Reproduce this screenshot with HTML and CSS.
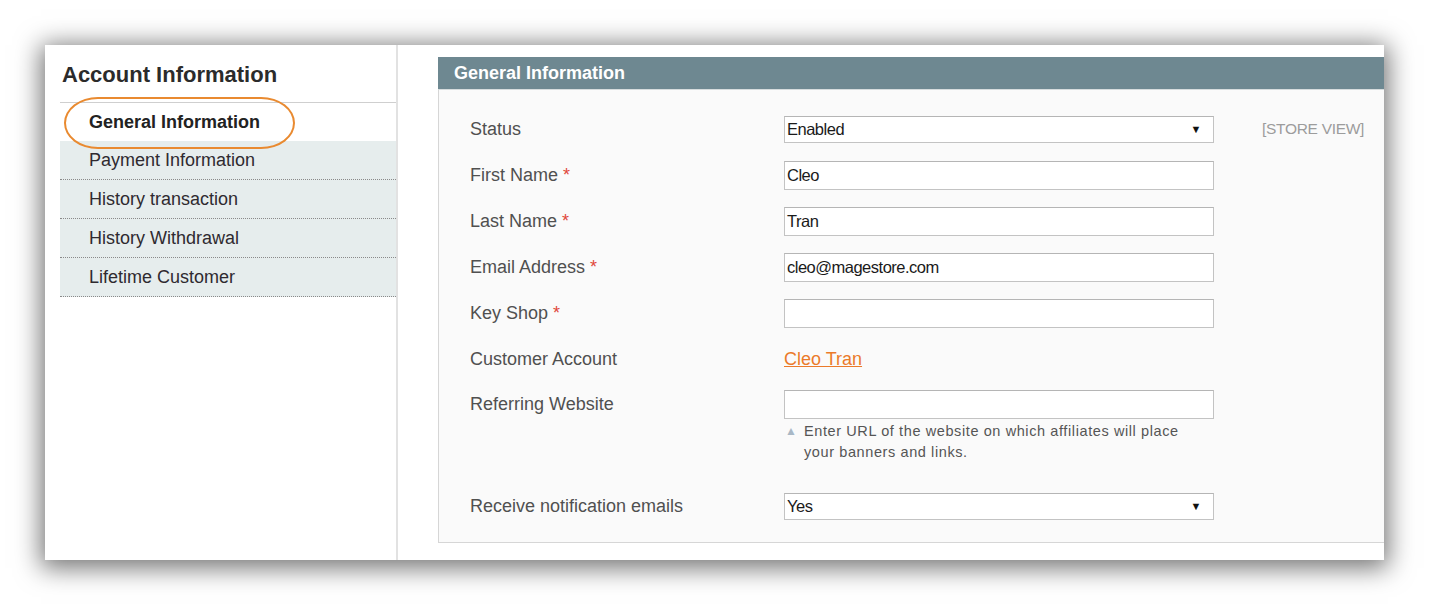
FILE: index.html
```html
<!DOCTYPE html>
<html lang="en">
<head>
<meta charset="utf-8">
<title>Account Information</title>
<link rel="stylesheet" href="styles.css">
</head>
<body>
<div class="shot">
  <aside class="sidebar">
    <h2 class="side-title">Account Information</h2>
    <ul class="tabs">
      <li class="tab active">General Information<span class="ring"></span></li>
      <li class="tab">Payment Information</li>
      <li class="tab">History transaction</li>
      <li class="tab">History Withdrawal</li>
      <li class="tab">Lifetime Customer</li>
    </ul>
  </aside>
  <main class="main">
    <section class="panel">
      <h3 class="panel-head">General Information</h3>
      <div class="panel-body">
        <div class="row">
          <label class="label">Status</label>
          <div class="field"><div class="select">Enabled<span class="arrow">&#9660;</span></div></div>
          <span class="scope">[STORE VIEW]</span>
        </div>
        <div class="row">
          <label class="label">First Name <span class="req">*</span></label>
          <div class="field"><div class="input">Cleo</div></div>
        </div>
        <div class="row">
          <label class="label">Last Name <span class="req">*</span></label>
          <div class="field"><div class="input">Tran</div></div>
        </div>
        <div class="row">
          <label class="label">Email Address <span class="req">*</span></label>
          <div class="field"><div class="input">cleo@magestore.com</div></div>
        </div>
        <div class="row">
          <label class="label">Key Shop <span class="req">*</span></label>
          <div class="field"><div class="input"></div></div>
        </div>
        <div class="row">
          <label class="label">Customer Account</label>
          <div class="field"><a class="link" href="#">Cleo Tran</a></div>
        </div>
        <div class="row row-tall">
          <label class="label label-top">Referring Website</label>
          <div class="field">
            <div class="input"></div>
            <p class="hint"><span class="hint-arrow">&#9650;</span>Enter URL of the website on which affiliates will place your banners and links.</p>
          </div>
        </div>
        <div class="row">
          <label class="label">Receive notification emails</label>
          <div class="field"><div class="select">Yes<span class="arrow">&#9660;</span></div></div>
        </div>
      </div>
    </section>
  </main>
</div>
</body>
</html>
```

FILE: styles.css
```css
* { box-sizing: border-box; }

html, body {
  margin: 0;
  padding: 0;
  background: #ffffff;
}

body {
  font-family: "Liberation Sans", Arial, sans-serif;
  color: #2e2e2e;
  min-height: 606px;
  padding: 45px 0 46px 45px;
}

.shot {
  width: 1339px;
  height: 515px;
  background: #ffffff;
  box-shadow: 0 4px 24px 4px rgba(0, 0, 0, 0.55);
  display: flex;
  overflow: hidden;
}

/* Sidebar */
.sidebar {
  margin-left: 15px;
  width: 338px;
  flex: none;
  border-right: 2px solid #e2e2e2;
}

.side-title {
  margin: 0;
  height: 58px;
  padding: 18px 0 0 2px;
  font-size: 22px;
  line-height: 24px;
  font-weight: bold;
  color: #2b2b2b;
  border-bottom: 1px solid #cfcfcf;
}

.tabs {
  list-style: none;
  margin: 0;
  padding: 0;
}

.tab {
  height: 39px;
  padding-left: 29px;
  font-size: 18px;
  line-height: 38px;
  color: #2f2a30;
  background: #e6eded;
  border-bottom: 1px dotted #8a8a8a;
}

.tab.active {
  position: relative;
  height: 38px;
  background: #ffffff;
  font-weight: bold;
  color: #222;
  border-bottom: none;
}

.ring {
  position: absolute;
  left: 4px;
  top: -6px;
  width: 231px;
  height: 52px;
  border: 2.5px solid #e98a30;
  border-radius: 34px / 26px;
}

/* Main */
.main {
  flex: 1;
  padding: 12px 0 17px 40px;
  display: flex;
}

.panel {
  flex: 1;
  margin-right: -30px;
  display: flex;
  flex-direction: column;
  border: 1px solid #d6d6d6;
  border-top: none;
  background: #fafafa;
}

.panel-head {
  margin: 0 -1px;
  height: 33px;
  padding-left: 16px;
  font-size: 18px;
  line-height: 33px;
  font-weight: bold;
  color: #ffffff;
  background: #6e8891;
  border-bottom: 1px solid #d6dcdd;
}

.panel-body {
  padding: 16px 0 12px 31px;
}

.row {
  display: flex;
  align-items: center;
  height: 46px;
}

.row-tall {
  height: auto;
  align-items: flex-start;
  padding: 8px 0 20px;
}

.label {
  width: 314px;
  flex: none;
  font-size: 18px;
  color: #505050;
}

.label-top {
  line-height: 29px;
}

.req {
  color: #e0473a;
}

.field {
  width: 430px;
  flex: none;
}

.input,
.select {
  position: relative;
  height: 29px;
  padding-left: 2px;
  background: #ffffff;
  border: 1px solid #c3c3c3;
  border-top-color: #b5b5b5;
  font-size: 16.5px;
  line-height: 27px;
  letter-spacing: -0.5px;
  color: #1a1a1a;
}

.select {
  height: 27px;
  line-height: 25px;
}

.arrow {
  position: absolute;
  right: 12px;
  top: 0;
  font-size: 11px;
  color: #111;
}

.scope {
  margin-left: 48px;
  font-size: 15.5px;
  letter-spacing: -0.3px;
  color: #9c9c9c;
}

.link {
  font-size: 18px;
  color: #eb7a2a;
  text-decoration: underline;
}

.hint {
  margin: 2px 0 0;
  width: 414px;
  padding-left: 20px;
  position: relative;
  font-size: 14.5px;
  line-height: 21px;
  letter-spacing: 0.6px;
  color: #555;
}

.hint-arrow {
  position: absolute;
  left: 1px;
  top: 0;
  font-size: 12px;
  color: #a9b8c6;
}
```
